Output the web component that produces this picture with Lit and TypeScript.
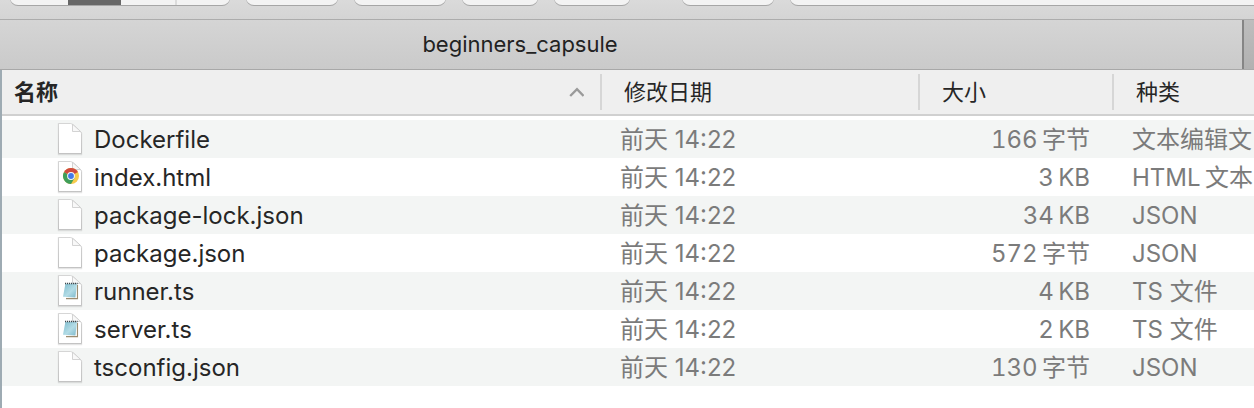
import { LitElement, html, css, svg, nothing } from "lit";
import { customElement, property } from "lit/decorators.js";

type IconKind = "blank" | "chrome" | "notepad";

interface FileEntry {
  name: string;
  icon: IconKind;
  modified: string;
  size: string;
  kind: string;
}

const FILES: FileEntry[] = [
  { name: "Dockerfile", icon: "blank", modified: "前天 14:22", size: "166\u2009字节", kind: "文本编辑文" },
  { name: "index.html", icon: "chrome", modified: "前天 14:22", size: "3\u2009KB", kind: "HTML\u2009文本" },
  { name: "package-lock.json", icon: "blank", modified: "前天 14:22", size: "34\u2009KB", kind: "JSON" },
  { name: "package.json", icon: "blank", modified: "前天 14:22", size: "572\u2009字节", kind: "JSON" },
  { name: "runner.ts", icon: "notepad", modified: "前天 14:22", size: "4\u2009KB", kind: "TS 文件" },
  { name: "server.ts", icon: "notepad", modified: "前天 14:22", size: "2\u2009KB", kind: "TS 文件" },
  { name: "tsconfig.json", icon: "blank", modified: "前天 14:22", size: "130\u2009字节", kind: "JSON" },
];

@customElement("file-icon")
export class FileIcon extends LitElement {
  @property() kind: IconKind = "blank";

  static styles = css`
    :host {
      display: block;
      width: 28px;
      height: 34px;
    }
    .page {
      display: block;
      width: 28px;
      height: 34px;
    }
  `;

  private badge() {
    if (this.kind === "chrome") {
      return svg`
        <circle cx="15" cy="16" r="8" fill="#f7cb4d"></circle>
        <path d="M15 16 L8.07 12 A8 8 0 0 0 15 24 L18.6 17.9Z" fill="#3f9e5a"></path>
        <path d="M15 16 L8.07 12 A8 8 0 0 1 21.93 12Z" fill="#cf4a3f"></path>
        <circle cx="15" cy="16" r="3.9" fill="#f4f6fb"></circle>
        <circle cx="15" cy="16" r="2.9" fill="#4379e8"></circle>`;
    }
    if (this.kind === "notepad") {
      return svg`
        <path d="M11 10.5H22V25H10Z" fill="#fbfaf7"></path>
        <path d="M21.5 11V24.6H10" stroke="#9c8c70" stroke-width="1.1" fill="none"></path>
        <path d="M9.4 10H21L19.4 23.6L7 22.8Z" fill="url(#pad)"></path>
        <path d="M9 9.5H21.6" stroke="#3b4a50" stroke-width="1.4" stroke-dasharray="1.2 .8" fill="none"></path>`;
    }
    return nothing;
  }

  render() {
    return html`
      <svg class="page" viewBox="0 0 28 34" aria-hidden="true">
        <defs>
          <linearGradient id="pad" x1="0" y1="0" x2="1" y2="1">
            <stop offset="0" stop-color="#7fbccd"></stop>
            <stop offset=".55" stop-color="#b3dce6"></stop>
            <stop offset="1" stop-color="#7bb7c9"></stop>
          </linearGradient>
          <linearGradient id="edge" x1="0" y1="0" x2="0" y2="1">
            <stop offset="0" stop-color="#d2d2d2"></stop>
            <stop offset="1" stop-color="#bdbdbd"></stop>
          </linearGradient>
        </defs>
        <path d="M2.5 2H14.5L25.5 11V32.5H2.5Z" fill="none" stroke="#000" stroke-opacity=".1" stroke-width="1.4"></path>
        <path d="M2.5 1.5H14.5C16.5 1.5 25.5 9.5 25.5 11.5V31.5H2.5Z" fill="#fff" stroke="url(#edge)" stroke-width=".9"></path>
        <path d="M16.5 2.2V9.5H24.6Z" fill="#f8f8f8" stroke="#cecece" stroke-width=".9" stroke-linejoin="round"></path>
        ${this.badge()}
      </svg>
    `;
  }
}

@customElement("app-root")
export class AppRoot extends LitElement {
  static styles = css`
    :host {
      display: block;
      min-height: 100vh;
      background: #fff;
      color: #262626;
      font-family: Inter, "Noto Sans CJK SC", sans-serif;
      font-size: 24px;
    }
    button,
    input {
      font: inherit;
      color: inherit;
      border: 0;
      margin: 0;
      padding: 0;
      background: none;
    }
    .toolbar {
      display: flex;
      align-items: flex-end;
      gap: 16px;
      height: 20px;
      box-sizing: border-box;
      padding: 0 0 14px 10px;
      overflow: hidden;
      background: linear-gradient(#dadada, #d4d4d4);
      border-bottom: 1px solid #acacac;
    }
    .tool,
    .views,
    .search {
      flex: none;
      height: 44px;
      box-sizing: border-box;
      border-radius: 8px;
      background: #f3f3f3;
      box-shadow: 0 1px 0 #a6a6a6;
    }
    .tool {
      width: 92px;
    }
    .small {
      width: 76px;
    }
    .views {
      display: flex;
      width: 220px;
      overflow: hidden;
    }
    .view {
      flex: 1;
    }
    .view:first-child {
      flex: none;
      width: 58px;
    }
    .view:last-child {
      border-left: 2px solid #dcdcdc;
    }
    .active {
      background: #676767;
    }
    .spread {
      margin-left: 36px;
    }
    .search {
      flex: 1;
      min-width: 0;
      border-radius: 8px 0 0 8px;
    }
    .tabs {
      display: flex;
      height: 50px;
      box-sizing: border-box;
      border-bottom: 1px solid #a8a8a8;
      background: linear-gradient(#d5d5d5, #cacaca);
    }
    .tab {
      flex: 1;
      padding: 0 202px 2px 0;
      font-size: 22px;
      color: #222;
      text-align: center;
    }
    .next {
      width: 12px;
      box-sizing: border-box;
      border-left: 2px solid #858585;
      background: linear-gradient(#bdbdbd, #b1b1b1);
    }
    .list {
      min-height: calc(100vh - 70px);
      box-sizing: border-box;
      border-left: 2px solid #9eabb3;
    }
    table {
      width: 100%;
      table-layout: fixed;
      border-collapse: separate;
      border-spacing: 0;
    }
    .col-date {
      width: 318px;
    }
    .col-size {
      width: 194px;
    }
    .col-kind {
      width: 140px;
    }
    th {
      height: 44px;
      padding: 0;
      border-bottom: 2px solid #d0d0d0;
      background: #efefef;
      font-size: 22px;
      font-weight: 400;
      text-align: left;
    }
    .head {
      display: flex;
      align-items: center;
      justify-content: space-between;
      width: 100%;
      height: 36px;
      box-sizing: border-box;
      padding: 0 16px 4px 22px;
      border-right: 2px solid #d6d6d6;
    }
    .sorted {
      padding-left: 12px;
      font-weight: 700;
    }
    .end {
      border-right: 0;
    }
    .caret {
      width: 16px;
      height: 16px;
    }
    .gap td {
      height: 4px;
    }
    td {
      padding: 0;
      overflow: hidden;
      white-space: nowrap;
      line-height: 36px;
      color: #7b7b7b;
    }
    .row td {
      height: 38px;
      box-sizing: border-box;
    }
    .row:nth-child(even) td {
      background: #f3f5f4;
    }
    .name {
      display: flex;
      align-items: center;
      gap: 10px;
      padding-left: 54px;
      color: #262626;
    }
    .label,
    .date,
    .size,
    .kind {
      padding-top: 2px;
    }
    .date,
    .kind {
      padding-left: 18px;
    }
    .size {
      padding-right: 24px;
      text-align: right;
      font-variant-numeric: tabular-nums;
    }
  `;

  render() {
    return html`
      <div class="toolbar" role="toolbar" aria-label="工具栏">
        <div class="views" role="group" aria-label="显示方式">
          <button class="view" aria-label="图标"></button>
          <button class="view active" aria-label="列表" aria-pressed="true"></button>
          <button class="view" aria-label="分栏"></button>
          <button class="view" aria-label="画廊"></button>
        </div>
        <button class="tool" aria-label="分组"></button>
        <button class="tool" aria-label="操作"></button>
        <button class="tool small" aria-label="共享"></button>
        <button class="tool small" aria-label="标签"></button>
        <button class="tool spread" aria-label="更多"></button>
        <input class="search" type="search" aria-label="搜索" />
      </div>
      <div class="tabs">
        <button class="tab">beginners_capsule</button>
        <button class="next" aria-label="下一个标签页"></button>
      </div>
      <div class="list">
        <table>
          <colgroup>
            <col />
            <col class="col-date" />
            <col class="col-size" />
            <col class="col-kind" />
          </colgroup>
          <thead>
            <tr>
              <th scope="col" aria-sort="ascending">
                <button class="head sorted">
                  名称
                  <svg class="caret" viewBox="0 0 16 16" aria-hidden="true">
                    <path d="M2.2 14L9 7.2L15.6 14" fill="none" stroke="#9a9a9a" stroke-width="2.4"></path>
                  </svg>
                </button>
              </th>
              <th scope="col"><button class="head">修改日期</button></th>
              <th scope="col"><button class="head">大小</button></th>
              <th scope="col"><button class="head end">种类</button></th>
            </tr>
          </thead>
          <tbody>
            <tr class="gap" aria-hidden="true"><td colspan="4"></td></tr>
            ${FILES.map(
              (f) => html`
                <tr class="row">
                  <td><div class="name"><file-icon kind=${f.icon}></file-icon><span class="label">${f.name}</span></div></td>
                  <td class="date">${f.modified}</td>
                  <td class="size">${f.size}</td>
                  <td class="kind">${f.kind}</td>
                </tr>
              `
            )}
          </tbody>
        </table>
      </div>
    `;
  }
}
